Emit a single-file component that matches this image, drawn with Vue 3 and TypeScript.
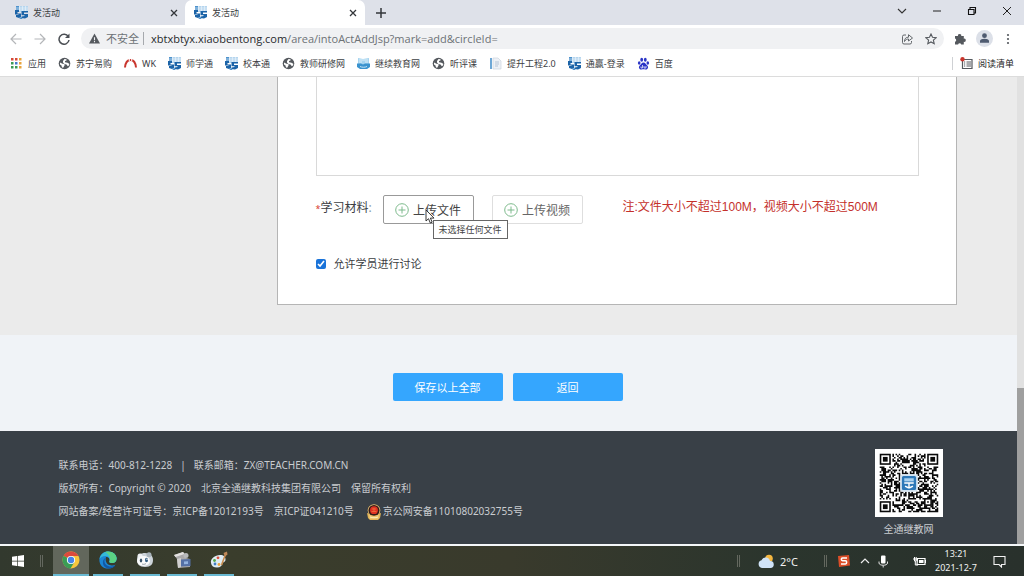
<script setup lang="ts">
import { ref } from 'vue'

interface Tab { title: string; active: boolean }
interface Bookmark { label: string; icon: 'globe' | 'wk' | 'brand' | 'brandLight' | 'doc' | 'paw' | 'apps' }

const tabs: Tab[] = [
  { title: '发活动', active: false },
  { title: '发活动', active: true },
]

const bookmarks: Bookmark[] = [
  { label: '应用', icon: 'apps' },
  { label: '苏宁易购', icon: 'globe' },
  { label: 'WK', icon: 'wk' },
  { label: '师学通', icon: 'brand' },
  { label: '校本通', icon: 'brand' },
  { label: '教师研修网', icon: 'globe' },
  { label: '继续教育网', icon: 'brandLight' },
  { label: '听评课', icon: 'globe' },
  { label: '提升工程2.0', icon: 'doc' },
  { label: '通赢-登录', icon: 'brand' },
  { label: '百度', icon: 'paw' },
]

const uploads = [
  { label: '上传文件', hovered: true },
  { label: '上传视频', hovered: false },
]

const allowDiscussion = ref(true)
const content = ref('')

const appDots = ['#d64937', '#d64937', '#e8a33d', '#3c9a54', '#4779c9', '#e8a33d', '#3c9a54', '#3c9a54', '#e8a33d']

const SIZE = 37
function inFinder(x: number, y: number): boolean {
  return (x < 8 && y < 8) || (x >= SIZE - 8 && y < 8) || (x < 8 && y >= SIZE - 8)
}
function buildModules(): string {
  let seed = 90721
  let d = ''
  for (let y = 0; y < SIZE; y++) {
    for (let x = 0; x < SIZE; x++) {
      seed = (seed * 1103515245 + 12345) % 2147483648
      const inLogo = x > 12 && x < 24 && y > 12 && y < 24
      const inAlign = x > 27 && x < 33 && y > 27 && y < 33
      if (inFinder(x, y) || inLogo || inAlign) continue
      if (seed / 2147483648 > 0.48) d += `M${x} ${y}h1v1h-1z`
    }
  }
  return d
}
const modules = buildModules()
const finders = [[0, 0], [SIZE - 7, 0], [0, SIZE - 7]]
</script>

<template>
  <div class="screen">
    <svg class="defs" aria-hidden="true">
      <symbol id="brand" viewBox="0 0 13 13">
        <path d="M1 0h12v6H1z" fill="#b5d5ee" />
        <path d="M1 0h3v6H1z" fill="#4e92cc" />
        <path d="M1 2h12M1 4h12M4.500 0v5M7.500 0v5M10.500 0v5" stroke="#eef6fc" stroke-width=".6" />
        <path d="M0 4h4v2H2.500v1.500H6V11l-2 1-3-1V9h2.500V8.500H0zM6.500 5H13v1.500H9V8h4v3l-3 1.500L6.500 12v-1.500l3-.5V9.300h-3z" fill="#1c64a8" />
        <path d="M4 12l2.500-1 1 2-2 0z" fill="#4a8fca" />
      </symbol>
      <symbol id="brandLight" viewBox="0 0 13 13">
        <path d="M1 1l5 1 6-1v7H1z" fill="#a5d3ef" />
        <path d="M0 6.500h4l2 1 2-1h5V10l-3 2H3l-3-2z" fill="#3a93cf" />
        <path d="M2 3h9M2 5h3M8 5h3M3 9.500c2 1 5 1 7 0" fill="none" stroke="#e8f6fd" stroke-width=".8" />
      </symbol>
      <symbol id="globe" viewBox="0 0 13 13">
        <circle cx="6.500" cy="6.500" r="5.800" fill="#55595e" />
        <path d="M2 5.500l2.500 1.200 2 .3v1.500L5 11 3.800 10 3.500 8.500 2 7.500zM6.500 2l2 .2L8.500 3.500 7 4v1.300l2.500.5 1.700 1v1.500L9.800 9.200 8.500 7.500l-2-.5L5 5.500 5 4z" fill="#fff" />
      </symbol>
      <symbol id="wk" viewBox="0 0 13 13">
        <path d="M1 10.500C1.500 5 3.500 3 6.500 3S11.500 5 12 10.500" fill="none" stroke="#c9362e" stroke-width="2" />
        <path d="M4.800 1.500h1v3h-1zM7.200 1.500h1v3h-1z" fill="#fff" />
      </symbol>
      <symbol id="doc" viewBox="0 0 13 13">
        <path d="M1 1h2v11H1z" fill="#6fa8d6" />
        <path d="M4 1h5l3 3v8H4z" fill="#eef1f6" stroke="#ccd4de" stroke-width=".7" />
        <path d="M6 5h4M6 7h4M6 9h3" stroke="#b4c3d5" />
      </symbol>
      <symbol id="paw" viewBox="0 0 13 13">
        <g fill="#2b35c6">
          <ellipse cx="4.700" cy="2.800" rx="1.400" ry="2" /><ellipse cx="8.300" cy="2.800" rx="1.400" ry="2" />
          <ellipse cx="2.200" cy="6" rx="1.300" ry="1.800" /><ellipse cx="10.800" cy="6" rx="1.300" ry="1.800" />
          <path d="M6.500 5.500c2 0 2.500 2 4 3.300 1.500 2-.2 4-2 3.700-1.500-.3-2.500-.3-4 0-1.800.3-3.500-1.700-2-3.700C4 7.500 4.500 5.500 6.500 5.500z" />
        </g>
        <path d="M5.500 8v3H4V9.500M7 9v2h2V9" fill="none" stroke="#fff" stroke-width=".7" />
      </symbol>
    </svg>

    <header class="browser">
      <div class="tabstrip">
        <div v-for="(t, i) in tabs" :key="i" class="tab" :class="{ active: t.active }">
          <svg class="fav"><use href="#brand" /></svg>
          <span class="tab-title">{{ t.title }}</span>
          <button class="plain close" aria-label="关闭标签页">
            <svg viewBox="0 0 8 8"><path d="M1 1l6 6M7 1L1 7" stroke="#33363a" stroke-width="1.300" /></svg>
          </button>
        </div>
        <button class="plain newtab" aria-label="新标签页">
          <svg viewBox="0 0 10 10"><path d="M5 0v10M0 5h10" stroke="#33363a" stroke-width="1.500" /></svg>
        </button>
        <div class="window-controls">
          <button class="plain" aria-label="搜索标签页"><svg viewBox="0 0 10 10"><path d="M1 3l4 4 4-4" fill="none" stroke="#333" stroke-width="1.100" /></svg></button>
          <button class="plain" aria-label="最小化"><svg viewBox="0 0 10 10"><path d="M1 5h8" stroke="#222" /></svg></button>
          <button class="plain" aria-label="还原"><svg viewBox="0 0 10 10"><path d="M1.500 3.500h5.500v5H1.500zM3 3V1.500h5.500v5.500H7" fill="none" stroke="#111" stroke-width="1.100" /></svg></button>
          <button class="plain" aria-label="关闭"><svg viewBox="0 0 10 10"><path d="M1 1l8 8M9 1L1 9" stroke="#222" /></svg></button>
        </div>
      </div>

      <div class="toolbar">
        <button class="plain nav" aria-label="后退"><svg viewBox="0 0 12 12"><path d="M11.500 6H1M6 1L1 6l5 5" fill="none" stroke="#b4b6b9" stroke-width="1.200" /></svg></button>
        <button class="plain nav" aria-label="前进"><svg viewBox="0 0 12 12"><path d="M.5 6H11M6 1l5 5-5 5" fill="none" stroke="#b4b6b9" stroke-width="1.200" /></svg></button>
        <button class="plain nav" aria-label="重新加载"><svg viewBox="0 0 12 12"><path d="M10.300 3.600A5 5 0 1 0 11 7" fill="none" stroke="#4b4f54" stroke-width="1.500" /><path d="M11.500.5v4.500H7z" fill="#4b4f54" /></svg></button>
        <div class="omnibox">
          <svg class="warn" viewBox="0 0 12 11"><path d="M6 0l6 11H0z" fill="#55595e" /><path d="M6 4v3.500M6 8.300v1.300" stroke="#f0f1f3" stroke-width="1.200" /></svg>
          <span class="insecure">不安全</span>
          <span class="url"><span class="host">xbtxbtyx.xiaobentong.com</span>/area/intoActAddJsp?mark=add&amp;circleId=</span>
          <button class="plain" aria-label="分享"><svg viewBox="0 0 12 12"><path d="M5 2H3a1.500 1.500 0 0 0-1.500 1.500v6A1.500 1.500 0 0 0 3 11h6a1.500 1.500 0 0 0 1.500-1.500V8M3.500 8.500c0-3 1.500-4.300 4-4.300V1.700L11.500 5 7.500 8V6C6 6 4.500 6.500 3.500 8.500z" fill="none" stroke="#55595e" stroke-width=".9" /></svg></button>
          <button class="plain" aria-label="收藏"><svg viewBox="0 0 12 12"><path d="M6 1l1.500 3.300 3.700.4-2.800 2.400.8 3.600L6 8.900l-3.200 1.800.8-3.600L.8 4.700l3.700-.4z" fill="none" stroke="#55595e" stroke-width="1.100" /></svg></button>
        </div>
        <div class="tools">
          <button class="plain" aria-label="扩展程序"><svg viewBox="0 0 12 12"><path d="M1 3h3a1.700 1.700 0 1 1 3.300 0h2.500v2.700a1.600 1.600 0 1 1 0 3.100V11.500H7.200a1.600 1.600 0 0 0-3.100 0H1V8.700a1.600 1.600 0 0 0 0-3.100z" fill="#55595e" /></svg></button>
          <button class="plain profile" aria-label="用户"><svg viewBox="0 0 17 17"><circle cx="8.500" cy="8.500" r="8.500" fill="#dce0e8" /><circle cx="8.500" cy="5.700" r="2.400" fill="#4f5b70" /><path d="M4 12.700V11c0-1.500 3-2.200 4.500-2.200S13 9.500 13 11v1.700z" fill="#4f5b70" /></svg></button>
          <button class="plain" aria-label="菜单"><svg viewBox="0 0 12 12"><g fill="#55595e"><circle cx="6" cy="2" r="1.100" /><circle cx="6" cy="6" r="1.100" /><circle cx="6" cy="10" r="1.100" /></g></svg></button>
        </div>
      </div>

      <nav class="bookmarks">
        <a v-for="b in bookmarks" :key="b.label" href="#">
          <svg v-if="b.icon === 'apps'" class="fav" viewBox="0 0 13 13">
            <rect v-for="(c, i) in appDots" :key="i" :x="1 + (i % 3) * 4" :y="1 + Math.floor(i / 3) * 4" width="2.500" height="2.500" :fill="c" />
          </svg>
          <svg v-else class="fav"><use :href="'#' + b.icon" /></svg>
          <span>{{ b.label }}</span>
        </a>
        <a href="#" class="reading">
          <svg class="fav" viewBox="0 0 13 13"><path d="M2.500 2.500h9.500v9H2.500z" fill="none" stroke="#55595e" stroke-width="1.200" /><path d="M4 5h1.200M6.500 5H11M4 7h1.200M6.500 7H11M4 9h1.200M6.500 9H11" stroke="#55595e" /><circle cx="2.500" cy="2.200" r="2.200" fill="#c8352c" /></svg>
          <span>阅读清单</span>
        </a>
      </nav>
    </header>

    <div class="viewport">
      <main class="page">
        <section class="form-area">
          <div class="container">
            <form class="card" @submit.prevent>
              <textarea v-model="content" aria-label="活动内容"></textarea>
              <div class="materials">
                <span class="field-label"><i>*</i>学习材料<em>:</em></span>
                <div v-for="u in uploads" :key="u.label" class="upload-wrap">
                  <button type="button" class="upload" :class="{ hovered: u.hovered }">
                    <svg viewBox="0 0 14 14"><circle cx="7" cy="7" r="6.300" fill="none" stroke="#7dba8c" /><path d="M7 3.500v7M3.500 7h7" stroke="#7dba8c" /></svg>
                    {{ u.label }}
                  </button>
                  <template v-if="u.hovered">
                    <svg class="cursor" viewBox="0 0 10 15"><path d="M1 1v11l2.500-2.300L5.300 14l1.900-.8-1.800-4.100H9z" fill="#fff" stroke="#222" stroke-width=".9" /></svg>
                    <span class="tooltip" role="tooltip">未选择任何文件</span>
                  </template>
                </div>
                <p class="note">注:文件大小不超过100M，视频大小不超过500M</p>
              </div>
              <label class="discuss"><input v-model="allowDiscussion" type="checkbox" />允许学员进行讨论</label>
            </form>
          </div>
        </section>
        <section class="actions">
          <button class="primary">保存以上全部</button>
          <button class="primary">返回</button>
        </section>
        <footer class="footer">
          <div class="container footer-row">
            <div class="legal">
              <p><span>联系电话：400-812-1228</span><span class="bar">|</span><span>联系邮箱：ZX@TEACHER.COM.CN</span></p>
              <p class="spaced"><span>版权所有：Copyright © 2020</span><span>北京全通继教科技集团有限公司</span><span>保留所有权利</span></p>
              <p class="spaced"><span>网站备案/经营许可证号：京ICP备12012193号</span><span>京ICP证041210号</span>
                <span class="police"><svg viewBox="0 0 14 16"><path d="M0 9l3 1h8l3-1-1 5-2 2H3l-2-2z" fill="#e3b457" /><circle cx="7" cy="6.500" r="6.300" fill="#e9c173" /><circle cx="7" cy="6.500" r="5.500" fill="#351b18" /><circle cx="7" cy="6.200" r="3.900" fill="#df3322" /><path d="M5 5h4M4.500 7.500h5M7 4v4" stroke="#f2703c" stroke-width=".8" /><path d="M1.500 10.500c3 1.500 8 1.500 11 0l-1 4.500h-9z" fill="#ecc46c" /><path d="M3 13c3 1 5 1 8 0" fill="none" stroke="#fff0bd" /></svg>京公网安备11010802032755号</span>
              </p>
            </div>
            <figure class="qr">
              <svg viewBox="-3 -3 43 43" shape-rendering="geometricPrecision" role="img" aria-label="二维码">
                <rect x="-3" y="-3" width="43" height="43" fill="#fff" />
                <path :d="modules" fill="#0a0a0a" />
                <g v-for="(f, i) in finders" :key="i">
                  <rect :x="f[0] + 0.5" :y="f[1] + 0.5" width="6" height="6" fill="#fff" stroke="#0a0a0a" />
                  <rect :x="f[0] + 2" :y="f[1] + 2" width="3" height="3" fill="#0a0a0a" />
                </g>
                <rect x="28.500" y="28.500" width="4" height="4" fill="#fff" stroke="#0a0a0a" />
                <rect x="30" y="30" width="1" height="1" fill="#0a0a0a" />
                <rect x="13.500" y="13.500" width="10" height="10" rx="1.500" fill="#2d78b8" stroke="#d3e3f1" />
                <path d="M15.500 15.500h6v2h-6z" fill="#a8d0ee" />
                <path d="M15.500 18.500h6M16 20.500l2 1h1l2-1M18.500 18v4" fill="none" stroke="#fff" stroke-width=".9" />
              </svg>
              <figcaption>全通继教网</figcaption>
            </figure>
          </div>
        </footer>
      </main>
      <div class="scrollbar"><div class="track"></div><div class="thumb"></div></div>
    </div>

    <div class="taskbar">
      <button class="plain start" aria-label="开始"><svg viewBox="0 0 12 12"><path d="M0 1.700L5 1v4.700H0zM5.700.9L12 0v5.700H5.700zM0 6.400h5V11l-5-.7zM5.700 6.400H12V12l-6.300-.9z" fill="#fff" /></svg></button>
      <span class="grip"></span>
      <div class="apps">
        <button class="plain app current" aria-label="Chrome">
          <svg viewBox="0 0 18 18"><circle cx="9" cy="9" r="8.500" fill="#f7c63c" /><path d="M9 9L1.600 4.700A8.500 8.500 0 0 1 16.400 5H9z" fill="#dc4a3d" /><path d="M1.600 4.700A8.500 8.500 0 0 0 8.500 17.500L12.500 11 9 9z" fill="#3b9c55" /><circle cx="9" cy="9" r="4.100" fill="#fff" /><circle cx="9" cy="9" r="3.200" fill="#4684e8" /></svg>
        </button>
        <button class="plain app" aria-label="Edge">
          <svg viewBox="0 0 18 18"><path d="M.4 9C.4 4 4 .4 9 .4c5 0 8.600 3.300 8.600 7 0 3-2.200 4.600-4.600 4.600-2 0-3-.7-2.500-1.700C11.500 8 9.500 6 7 6c-1 3 0 8 5.500 8.500 1.700.1 3-.4 4-1C15 16 12.500 17.600 9 17.600 4 17.600.4 14 .4 9z" fill="#1b86d6" /><path d="M.5 8C1.500 3 5 .4 9 .4c5 0 8.600 3.300 8.600 7 0 3-2.200 4.600-4.600 4.600-2 0-3-.7-2.500-1.700C11.500 8 9.500 5 6.500 5 3.500 5 1.200 6.500.5 8z" fill="#35b9d8" /><path d="M9 .4c5 0 8.600 3.300 8.600 7 0 3-2.200 4.600-4.600 4.600-2 0-3-.7-2.500-1.700C12 6.500 10 3 6 1z" fill="#5bd283" /><path d="M6.500 7C4 10 6 15.500 12 15.500c2 0 3.500-.8 4.500-1.800-2 4-6.500 4.500-9.500 3C3 14.500 3 8.500 6.500 7z" fill="#1258a6" /></svg>
        </button>
        <button class="plain app" aria-label="录播助手">
          <svg viewBox="0 0 18 18"><path d="M1 8c0-4 4-6 8-6 5 0 8 3 8 7s-2 7-8 7-8-3-8-8z" fill="#cdd4da" /><circle cx="4" cy="5" r="2.500" fill="#eef1f4" /><circle cx="13" cy="3.800" r="2.500" fill="#aab5bd" /><ellipse cx="7.500" cy="10" rx="6.500" ry="5" fill="#fafbfc" /><ellipse cx="5" cy="9.500" rx="1.200" ry="2" fill="#39536a" /><ellipse cx="10.500" cy="9" rx="1.500" ry="2.200" fill="#315d83" /><circle cx="11" cy="8.300" r=".7" fill="#fff" /><path d="M6 13c1.500.6 2.500.4 4-.4" fill="none" stroke="#76858f" stroke-width=".7" /></svg>
        </button>
        <button class="plain app" aria-label="摄像机">
          <svg viewBox="0 0 18 18"><path d="M1 4l9-3 3 3v3l4 1v8l-12 1-1-9z" fill="#aaa9aa" /><path d="M1 4l9-3 1.500 2-9 3z" fill="#e3e1e0" /><path d="M4 8l4-1v9l-3 1z" fill="#d0cfcf" /><circle cx="13" cy="4.500" r="2.500" fill="#b7b9bb" /><path d="M8 8.500l9.500-.5v7L8 15.500z" fill="#5470a5" /><path d="M11 10.500l4-.2v2.700l-4 .2z" fill="#93b3df" /></svg>
        </button>
        <button class="plain app" aria-label="画图">
          <svg viewBox="0 0 18 18"><path d="M1 12c-1-4 4-8 9-8 4 0 5.500 2 5.500 4.500 0 3-2.500 2-3 4s-2 4-5.500 4-5.500-1.500-6-4.500z" fill="#dfedf5" /><circle cx="4.500" cy="9.500" r="1.400" fill="#54a848" /><circle cx="8" cy="6.800" r="1.400" fill="#db4f3d" /><circle cx="5" cy="13" r="1.400" fill="#437fc4" /><circle cx="9" cy="13.500" r="1.400" fill="#eda53c" /><path d="M16 2l-4.500 12" stroke="#c98b4c" stroke-width="1.600" /><path d="M13.500 2L17 .5l.5 3-2.500 2z" fill="#c18958" /></svg>
        </button>
      </div>
      <div class="tray">
        <span class="grip"></span>
        <button class="plain weather"><svg viewBox="0 0 16 15"><circle cx="11" cy="4.500" r="3.800" fill="#f4b740" /><path d="M4 14a4 4 0 0 1-.5-7.800A4.500 4.500 0 0 1 12 7a3.500 3.500 0 0 1 .5 7z" fill="#cfe3f7" /></svg>2°C</button>
        <span class="grip"></span>
        <svg class="sogou" viewBox="0 0 12 12"><path d="M0 1l11-1 1 10.500L1 12z" fill="#dc4e28" /><path d="M9 3H4.500C3 3 3 5.700 4.500 5.700h3C9 5.700 9 9 7.500 9H3" fill="none" stroke="#fff" stroke-width="1.600" /></svg>
        <svg class="up" viewBox="0 0 10 10"><path d="M1 7l4-4 4 4" fill="none" stroke="#eee" stroke-width="1.200" /></svg>
        <svg class="mic" viewBox="0 0 10 12"><rect x="3" y="0" width="4.500" height="8" rx="1" fill="#fff" /><path d="M1 6v1.500c0 3 8.500 3 8.500 0V6M5.200 10v2" fill="none" stroke="#e5e5e5" /></svg>
        <svg class="battery" viewBox="0 0 13 10"><path d="M4.500 2.500H12v6H4z" fill="none" stroke="#fff" stroke-width="1.200" /><path d="M6 4h4.500v3H6zM12 4h1v3h-1z" fill="#fff" /><path d="M0 3h4M1.500 1v4h1.700V1M2.300 5v4H5" fill="none" stroke="#fff" /></svg>
        <div class="clock"><time>13:21</time><time>2021-12-7</time></div>
        <button class="plain notice" aria-label="通知"><svg viewBox="0 0 13 13"><path d="M1 1.500h11v8H8.500v2.500L6 9.500H1z" fill="none" stroke="#f3f3f3" stroke-width="1.100" /></svg></button>
      </div>
    </div>
  </div>
</template>

<style>
body { margin: 0; }
</style>

<style scoped>
* { box-sizing: border-box; }
.screen {
  display: flex;
  flex-direction: column;
  height: 100vh;
  overflow: hidden;
  font-family: "Noto Sans", "Noto Sans CJK SC", sans-serif;
  font-size: 9px;
  color: #3c4043;
  background: #fff;
}
.defs { position: absolute; width: 0; height: 0; }
.screen svg { display: block; flex: none; }
.plain {
  display: flex;
  align-items: center;
  justify-content: center;
  padding: 0;
  border: 0;
  background: none;
  color: inherit;
  font: inherit;
}
.plain svg { width: 12px; height: 12px; }
.fav { width: 13px; height: 13px; }

.tabstrip { display: flex; height: 25px; background: #dee1e9; }
.tab {
  display: flex;
  align-items: center;
  gap: 5px;
  width: 185px;
  padding: 0 7px 0 15px;
}
.tab.active { width: 180px; padding: 0 8px 0 9px; background: #fff; border-radius: 7px 7px 0 0; }
.tab-title { flex: 1; }
.tab .close svg { width: 8px; height: 8px; }
.close { width: 8px; }
.newtab { width: 32px; }
.newtab svg { width: 10px; height: 10px; }
.window-controls { display: flex; height: 22px; margin-left: auto; }
.window-controls .plain { width: 35px; }
.window-controls svg { width: 10px; height: 10px; }

.toolbar { display: flex; align-items: center; height: 27px; padding: 0 4px; }
.nav { width: 24px; }
.omnibox {
  display: flex;
  flex: 1;
  align-items: center;
  height: 21px;
  margin-left: 5px;
  padding: 0 7px 0 8px;
  border-radius: 11px;
  background: #f0f1f3;
  font-size: 11px;
  color: #6d7176;
}
.omnibox .plain { width: 25px; }
.omnibox .plain:last-child { width: 12px; margin-left: 6px; }
.warn { width: 11px; height: 11px; }
.insecure { margin-left: 6px; padding-right: 4px; border-right: 1px solid #a6a9ad; line-height: 13px; }
.url { flex: 1; margin-left: 7px; font-family: "Open Sans", "Noto Sans", sans-serif; white-space: nowrap; }
.host { color: #27292c; }
.tools { display: flex; align-items: center; margin-left: 4px; }
.tools .plain { width: 24px; }
.tools .profile svg { width: 17px; height: 17px; }

.bookmarks {
  display: flex;
  align-items: center;
  gap: 12px;
  height: 25px;
  padding: 0 10px 2px;
  border-bottom: 1px solid #dcdcdc;
}
.bookmarks a { display: flex; align-items: center; gap: 5px; color: inherit; text-decoration: none; white-space: nowrap; }
.bookmarks .reading { margin-left: auto; padding-left: 7px; border-left: 1px solid #cfd1d4; color: #222; }

.viewport { display: flex; flex: 1; min-height: 0; border-bottom: 2px solid #f4f7f9; }
.page { display: flex; flex: 1; flex-direction: column; min-width: 0; }
.container { width: 100%; max-width: 900px; margin: 0 auto; }
.form-area { padding-bottom: 30px; background: #ebebeb; }
.card {
  margin: 0 2px 0 218px;
  padding: 0 37px 32px 38px;
  border: 1px solid #b5b5b5;
  border-top: 0;
  background: #fff;
}
textarea {
  display: block;
  width: 100%;
  height: 99px;
  padding: 8px;
  border: 1px solid #d9d9d9;
  border-top: 0;
  background: #fff;
  resize: none;
  outline: 0;
}
.materials { display: flex; margin-top: 19px; font-size: 12px; line-height: 25px; }
.field-label { width: 67px; white-space: nowrap; }
.field-label i { color: #d8402f; font-size: 9px; font-style: normal; }
.field-label em { color: #8ca0a8; font-style: normal; }
.upload-wrap { position: relative; margin-right: 18px; }
.upload {
  display: flex;
  align-items: center;
  justify-content: center;
  gap: 4px;
  width: 91px;
  height: 29px;
  padding: 0;
  border: 1px solid #dedede;
  border-radius: 2px;
  background: #fff;
  color: #666;
  font: 12px "Noto Sans CJK SC", sans-serif;
}
.upload svg { width: 14px; height: 14px; }
.upload.hovered { border-color: #999; color: #444; }
.cursor { position: absolute; left: 42px; top: 14px; z-index: 2; width: 10px; height: 15px; }
.tooltip {
  position: absolute;
  left: 50px;
  top: 25px;
  z-index: 1;
  padding: 0 5px;
  border: 1px solid #666;
  background: #fff;
  color: #444;
  font-size: 9px;
  line-height: 17px;
  white-space: nowrap;
}
.note { margin: 0 0 0 22px; color: #c4302b; font-family: "Liberation Sans", "Noto Sans CJK SC", sans-serif; white-space: nowrap; }
.discuss { display: flex; align-items: center; gap: 8px; margin-top: 32px; font-size: 11px; line-height: 16px; }
.discuss input { width: 10px; height: 10px; margin: 0; accent-color: #1a73d9; }

.actions { display: flex; justify-content: center; gap: 10px; padding: 38px 2px 30px 0; background: #f0f3f7; }
.primary {
  width: 110px;
  height: 28px;
  padding: 0;
  border: 0;
  border-radius: 2px;
  background: #35a6fe;
  color: #fff;
  font: 11px "Noto Sans CJK SC", sans-serif;
}

.footer { flex: 1; background: #394047; color: #c9ccd0; font-size: 10px; }
.footer-row { display: flex; justify-content: space-between; padding: 18px 16px 0 0; }
.legal { padding-top: 5px; }
.legal p { display: flex; margin: 0; line-height: 23px; white-space: nowrap; }
.spaced { gap: 10px; }
.bar { margin: 0 8px; }
.police { display: flex; align-items: center; gap: 2px; margin-left: 3px; }
.police svg { width: 14px; height: 16px; }
.qr { margin: 0; text-align: center; }
.qr svg { width: 68px; height: 68px; }
.qr figcaption { margin-top: 4px; line-height: 16px; }

.scrollbar { display: flex; flex-direction: column; width: 7px; background: #e1e1e1; }
.track { flex: 2; }
.thumb { flex: 1; background: #9f9f9f; }

.taskbar {
  display: flex;
  height: 30px;
  background: linear-gradient(90deg, #32392e, #3a3d2c 22%, #393a2c 50%, #2b352d 75%, #29312c);
  color: #f2f2f2;
}
.start { width: 36px; }
.grip { align-self: center; width: 3px; height: 12px; border: 1px solid #64685f; border-width: 0 1px; }
.start + .grip { margin-left: 4px; }
.apps { display: flex; gap: 7px; margin-left: 10px; }
.app { width: 30px; border-bottom: 2px solid #69b9d2; }
.app svg { width: 18px; height: 18px; }
.app.current { width: 36px; margin-right: -3px; background: #62675c; }
.tray { display: flex; align-items: center; margin-left: auto; padding-right: 13px; }
.weather { gap: 6px; margin: 0 26px 0 18px; font-size: 11px; }
.weather svg { width: 16px; height: 15px; }
.sogou { width: 12px; height: 12px; margin-left: 11px; }
.up { width: 10px; height: 10px; margin-left: 10px; }
.mic { width: 10px; height: 13px; margin-left: 8px; }
.battery { width: 13px; height: 10px; margin-left: 25px; }
.clock { display: flex; flex-direction: column; width: 60px; text-align: center; line-height: 14px; }
.notice { width: 24px; margin-left: 1px; }
.notice svg { width: 13px; height: 13px; }
</style>
